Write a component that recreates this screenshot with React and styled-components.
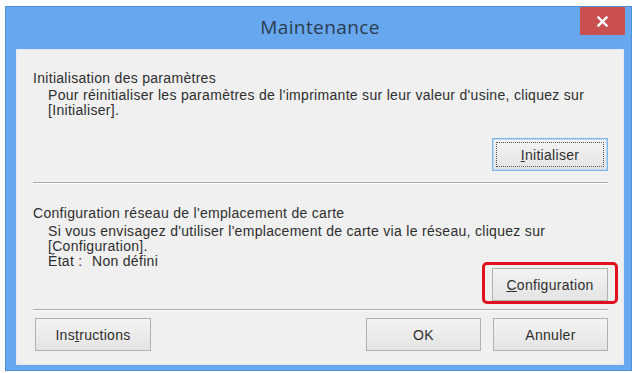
import styled, { createGlobalStyle } from "styled-components";

const GlobalStyle = createGlobalStyle`
  html, body {
    margin: 0;
    padding: 0;
    background: #ffffff;
  }
  body {
    font-family: "Liberation Sans", Arial, sans-serif;
  }
`;

const Page = styled.div`
  padding: 6px 5px 2px 5px;
  width: 637px;
  height: 373px;
  box-sizing: border-box;
`;

const Window = styled.div`
  width: 627px;
  height: 365px;
  box-sizing: border-box;
  background: #67a7ee;
  border: 1px solid #4f90d8;
  display: flex;
  flex-direction: column;
  padding: 0 7px 5px 10px;
`;

const TitleBar = styled.div`
  height: 42px;
  display: grid;
  grid-template-columns: 1fr auto 1fr;
  align-items: start;
`;

const Title = styled.div`
  grid-column: 2;
  margin-top: 7px;
  font-family: "Open Sans", "Noto Sans", sans-serif;
  font-size: 19px;
  color: #2b3d52;
  letter-spacing: 0.4px;
`;

const CloseButton = styled.div`
  grid-column: 3;
  justify-self: end;
  width: 45px;
  height: 28px;
  margin-right: -1px;
  background: #c9504e;
  color: #ffffff;
  display: flex;
  align-items: center;
  justify-content: center;
`;

const Client = styled.div`
  flex: 1;
  background: #f0f0f0;
  border: 1px solid #dfe9f5;
  display: flex;
  flex-direction: column;
  padding: 21px 15px 0 16px;
  color: #2e2e2e;
  font-size: 14px;
  letter-spacing: 0.3px;
`;

const Section = styled.div`
  display: flex;
  flex-direction: column;
`;

const Heading = styled.div`
  line-height: 15px;
  white-space: nowrap;
`;

const Body = styled.div`
  margin-top: ${(p) => p.$gap}px;
  padding-left: 15px;
  line-height: 15px;
`;

const Line = styled.div`
  white-space: nowrap;
`;

const StateLabel = styled.span`
  display: inline-block;
  width: 44px;
`;

const ButtonRow = styled.div`
  display: flex;
  justify-content: ${(p) => (p.$spread ? "space-between" : "flex-end")};
  margin-top: ${(p) => p.$top}px;
`;

const Group = styled.div`
  display: flex;
  gap: 12px;
`;

const Button = styled.div`
  position: relative;
  width: ${(p) => p.$w || 116}px;
  height: 33px;
  box-sizing: border-box;
  border: 1px solid ${(p) => (p.$focus ? "#7fb5e8" : "#b0b0b0")};
  background: linear-gradient(#f3f3f3, #e4e4e4);
  display: flex;
  align-items: center;
  justify-content: center;
  font-size: 14px;
  color: #2e2e2e;
  box-shadow: ${(p) => (p.$focus ? "inset 0 0 0 1px #bcd9f5" : "none")};

  &::after {
    content: "";
    display: ${(p) => (p.$focus ? "block" : "none")};
    position: absolute;
    inset: 3px;
    border: 1px dotted #555;
  }
`;

const Key = styled.span`
  text-decoration: underline;
`;

const Highlight = styled.div`
  position: absolute;
  top: -7px;
  bottom: -4px;
  left: -11px;
  right: -11px;
  border: 3px solid #e1121d;
  border-radius: 5px;
  pointer-events: none;
`;

const Separator = styled.div`
  height: 1px;
  background: #a9a9a9;
  border-bottom: 1px solid #ffffff;
  margin: ${(p) => p.$m};
`;

export default function App() {
  return (
    <>
      <GlobalStyle />
      <Page>
        <Window>
          <TitleBar>
            <Title>Maintenance</Title>
            <CloseButton>
              <svg width="11" height="11" viewBox="0 0 11 11">
                <path
                  d="M1.5 1.5 L9.5 9.5 M9.5 1.5 L1.5 9.5"
                  stroke="#ffffff"
                  strokeWidth="2.4"
                  strokeLinecap="square"
                />
              </svg>
            </CloseButton>
          </TitleBar>
          <Client>
            <Section>
              <Heading>Initialisation des paramètres</Heading>
              <Body $gap={2}>
                <Line>
                  Pour réinitialiser les paramètres de l'imprimante sur leur
                  valeur d'usine, cliquez sur
                </Line>
                <Line>[Initialiser].</Line>
              </Body>
              <ButtonRow $top={20}>
                <Button $focus>
                  <span>
                    <Key>I</Key>nitialiser
                  </span>
                </Button>
              </ButtonRow>
            </Section>
            <Separator $m="11px 0 22px 0" />
            <Section>
              <Heading>Configuration réseau de l'emplacement de carte</Heading>
              <Body $gap={3}>
                <Line>
                  Si vous envisagez d'utiliser l'emplacement de carte via le
                  réseau, cliquez sur
                </Line>
                <Line>[Configuration].</Line>
                <Line>
                  <StateLabel>État :</StateLabel>Non défini
                </Line>
              </Body>
              <ButtonRow $top={-1}>
                <Button>
                  <span>
                    <Key>C</Key>onfiguration
                  </span>
                  <Highlight />
                </Button>
              </ButtonRow>
            </Section>
            <Separator $m="8px 0 7px 0" />
            <ButtonRow $spread $top={0}>
              <Button style={{ marginLeft: 2 }}>
                <span>
                  Ins<Key>t</Key>ructions
                </span>
              </Button>
              <Group>
                <Button $w={115}>OK</Button>
                <Button $w={115}>Annuler</Button>
              </Group>
            </ButtonRow>
          </Client>
        </Window>
      </Page>
    </>
  );
}
